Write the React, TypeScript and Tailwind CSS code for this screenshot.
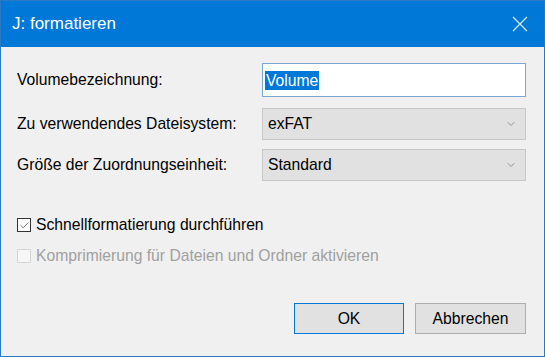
import { Check, ChevronDown } from 'lucide-react'

const FONT = { fontFamily: '"Liberation Sans", Arial, sans-serif' }

function SelectBox({ value }: { value: string }) {
  return (
    <div className="flex h-[32px] w-[264px] items-center justify-between border border-[#c7c7c7] bg-[#e1e1e1] pl-[5px] pr-[8px]">
      <span className="text-[15.7px] text-black">{value}</span>
      <ChevronDown size={12} strokeWidth={1.5} className="text-[#7a7a7a]" />
    </div>
  )
}

function Row({ label, children }: { label: string; children: React.ReactNode }) {
  return (
    <div className="flex items-center">
      <span className="w-[245px] text-[15.7px] text-black">{label}</span>
      {children}
    </div>
  )
}

export default function App() {
  return (
    <div
      className="flex h-[357px] w-[545px] flex-col border border-[#2b79c2] bg-[#f0f0f0]"
      style={FONT}
    >
      {/* Title bar */}
      <div className="flex h-[46px] shrink-0 items-center justify-between bg-[#0078d7] pl-[11px] pr-[16px]">
        <span className="text-[17px] text-white">J: formatieren</span>
        <svg width="16" height="16" viewBox="0 0 16 16" className="text-[#d8ecfb]">
          <path d="M1 1 L15 15 M15 1 L1 15" stroke="currentColor" strokeWidth="1.2" fill="none" />
        </svg>
      </div>

      {/* Body */}
      <div className="flex flex-1 flex-col pl-[16px] pr-[18px] pt-[16px]">
        <Row label="Volumebezeichnung:">
          <div className="flex h-[34px] w-[264px] items-center border border-[#7aa7d3] bg-white pl-[2px]">
            <span className="bg-[#0078d7] px-[1px] text-[15.7px] leading-[19px] text-white">Volume</span>
          </div>
        </Row>
        <div className="mt-[11px]">
          <Row label="Zu verwendendes Dateisystem:">
            <SelectBox value="exFAT" />
          </Row>
        </div>
        <div className="mt-[9px]">
          <Row label="Größe der Zuordnungseinheit:">
            <SelectBox value="Standard" />
          </Row>
        </div>

        {/* Checkboxes */}
        <div className="mt-[35px] flex h-[18px] items-center gap-[5px]">
          <div className="flex h-[14px] w-[14px] items-center justify-center border border-[#333] bg-white">
            <Check size={11} strokeWidth={1.4} className="text-[#222]" />
          </div>
          <span className="text-[15.7px] leading-[18px] text-black">Schnellformatierung durchführen</span>
        </div>
        <div className="mt-[13px] flex h-[18px] items-center gap-[5px]">
          <div className="h-[14px] w-[14px] border border-[#d4d4d4] bg-[#f7f7f7]" />
          <span className="text-[15.7px] leading-[18px] text-[#a0a0a0]">
            Komprimierung für Dateien und Ordner aktivieren
          </span>
        </div>

        {/* Buttons */}
        <div className="mt-auto mb-[22px] flex justify-end gap-[11px]">
          <button className="h-[31px] w-[110px] border border-[#0078d7] bg-[#e1e1e1] text-[15.7px] text-black">
            OK
          </button>
          <button className="h-[31px] w-[111px] border border-[#adadad] bg-[#e1e1e1] text-[15.7px] text-black">
            Abbrechen
          </button>
        </div>
      </div>
    </div>
  )
}
